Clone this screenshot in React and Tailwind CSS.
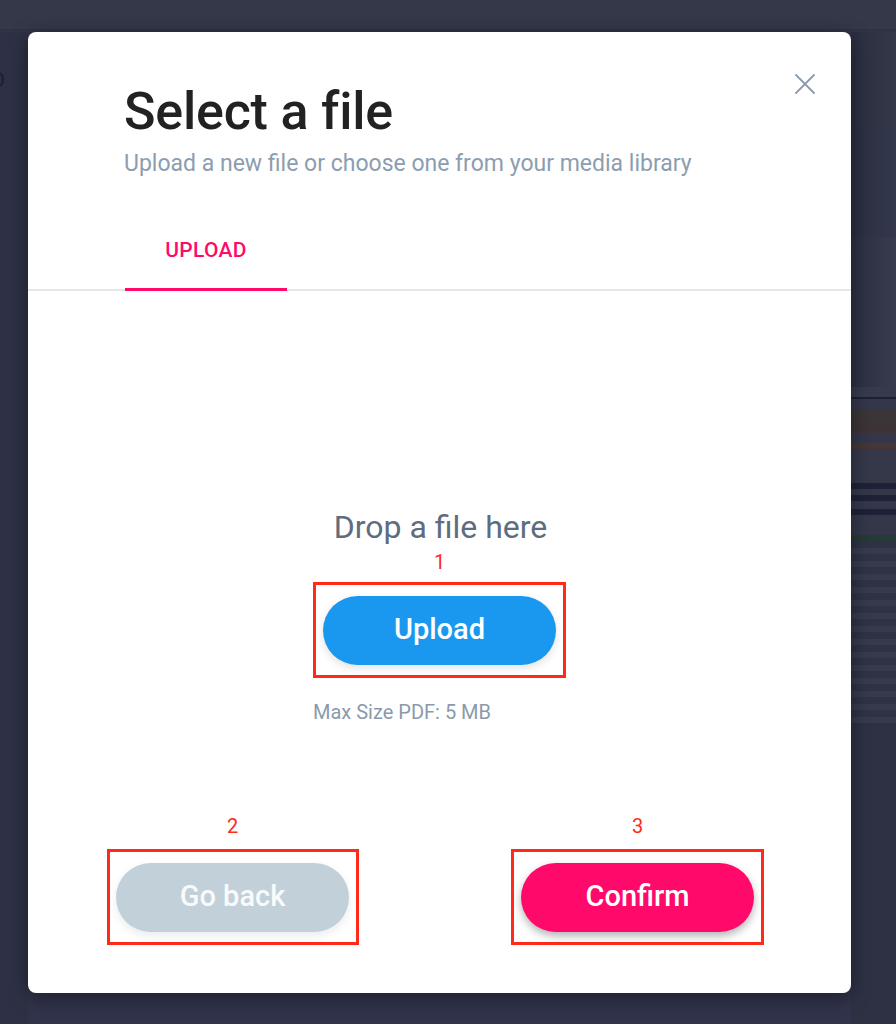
export default function App() {
  const stripes = [
    { h: 10, c: "#373a4c" },
    { h: 2, c: "#1c2036" },
    { h: 10, c: "#34374a" },
    { h: 14, c: "#3a3537" },
    { h: 10, c: "#3b3337" },
    { h: 10, c: "#34374a" },
    { h: 6, c: "#463636" },
    { h: 34, c: "#353849" },
    { h: 6, c: "#1e2238" },
    { h: 6, c: "#34374a" },
    { h: 6, c: "#1e2238" },
    { h: 8, c: "#34374a" },
    { h: 6, c: "#1e2238" },
    { h: 20, c: "#34374a" },
    { h: 6, c: "#263a36" },
  ];
  const thin = Array.from({ length: 28 });
  return (
    <div
      className="w-[896px] h-[1024px] overflow-hidden bg-[#30334a] flex flex-col"
      style={{ fontFamily: "Roboto, 'Noto Sans', sans-serif" }}
    >
      <div className="h-[30px] bg-[#353849] border-b border-[#2e3144] shrink-0" />
      <div className="flex flex-1 pt-[2px]">
        <div className="w-[28px] shrink-0 bg-[#2e3145] overflow-hidden">
          <div className="text-[20px] font-medium text-[#1e2136] ml-[-8px] mt-[36px] leading-[24px] w-[20px]">D</div>
        </div>
        <div className="w-[823px] h-[961px] shrink-0 bg-white rounded-[8px] shadow-[0_4px_20px_rgba(0,0,0,0.4)] relative flex flex-col">
          <button className="absolute top-[42px] right-[36px] w-[20px] h-[20px] text-[#8a9bb0]">
            <svg viewBox="0 0 20 20" width="20" height="20" fill="none" stroke="currentColor" strokeWidth="1.8" strokeLinecap="round">
              <path d="M1 1L19 19M19 1L1 19" />
            </svg>
          </button>
          <div className="pl-[96px] pt-[52px]">
            <h1 className="text-[52px] font-medium leading-[56px] text-[#222222] tracking-[-0.2px]">Select a file</h1>
            <p className="text-[23px] leading-[28px] text-[#8c9db0] mt-[10px]">
              Upload a new file or choose one from your media library
            </p>
          </div>
          <div className="border-b-2 border-[#e6e6e6] pl-[97px] mt-[60px]">
            <div className="w-[162px] text-center text-[21px] leading-[24px] font-medium text-[#ff0a6c] tracking-[0.3px] pb-[26px] border-b-[3px] border-[#ff0a6c] mb-[-2px]">
              UPLOAD
            </div>
          </div>
          <div className="flex flex-col items-center mt-[218px]">
            <div className="text-[32px] leading-[36px] text-[#5e6c80] ml-[2px]">Drop a file here</div>
            <div className="text-[20px] leading-[24px] text-[#ff2a1a] mt-[5px]">1</div>
            <div className="mt-[8px] w-[253px] h-[96px] border-[3px] border-[#ff2a1a] flex items-center justify-center">
              <button className="w-[233px] h-[69px] rounded-full bg-[#1a98ef] text-white text-[29px] font-medium shadow-[0_3px_8px_rgba(0,0,0,0.12)]">
                Upload
              </button>
            </div>
            <div className="mt-[23px] mr-[75px] text-[20px] leading-[22px] text-[#8b9aab]">Max Size PDF: 5 MB</div>
          </div>
          <div className="flex pl-[78px] gap-[152px] mt-[91px]">
            <div className="flex flex-col items-center w-[253px]">
              <div className="text-[20px] leading-[24px] text-[#ff2a1a]">2</div>
              <div className="mt-[11px] w-[252px] h-[96px] border-[3px] border-[#ff2a1a] flex items-center justify-center">
                <button className="w-[233px] h-[69px] rounded-full bg-[#c2d1d9] text-[#f8fafb] text-[29px] font-medium shadow-[0_4px_10px_rgba(0,0,0,0.08)]">
                  Go back
                </button>
              </div>
            </div>
            <div className="flex flex-col items-center w-[253px]">
              <div className="text-[20px] leading-[24px] text-[#ff2a1a]">3</div>
              <div className="mt-[11px] w-[253px] h-[96px] border-[3px] border-[#ff2a1a] flex items-center justify-center">
                <button className="w-[233px] h-[69px] rounded-full bg-[#ff0a6a] text-white text-[29px] font-medium shadow-[0_4px_8px_rgba(0,0,0,0.3)]">
                  Confirm
                </button>
              </div>
            </div>
          </div>
        </div>
        <div className="flex-1 flex flex-col">
          <div className="h-[95px] bg-gradient-to-r from-[#2b2e40] to-[#353849]" />
          <div className="h-[110px] bg-gradient-to-r from-[#2a2d40] to-[#33384c]" />
          <div className="h-[150px] bg-gradient-to-r from-[#2c2f42] to-[#383b4e]" />
          {stripes.map((s, i) => (
            <div key={i} style={{ height: s.h, background: s.c }} />
          ))}
          {thin.map((_, i) => (
            <div key={"t" + i} className={i % 2 === 0 ? "h-[7px] bg-[#2e3246]" : "h-[6px] bg-[#363a4c]"} />
          ))}
          <div className="flex-1 bg-[#2e3144]" />
        </div>
      </div>
    </div>
  );
}
